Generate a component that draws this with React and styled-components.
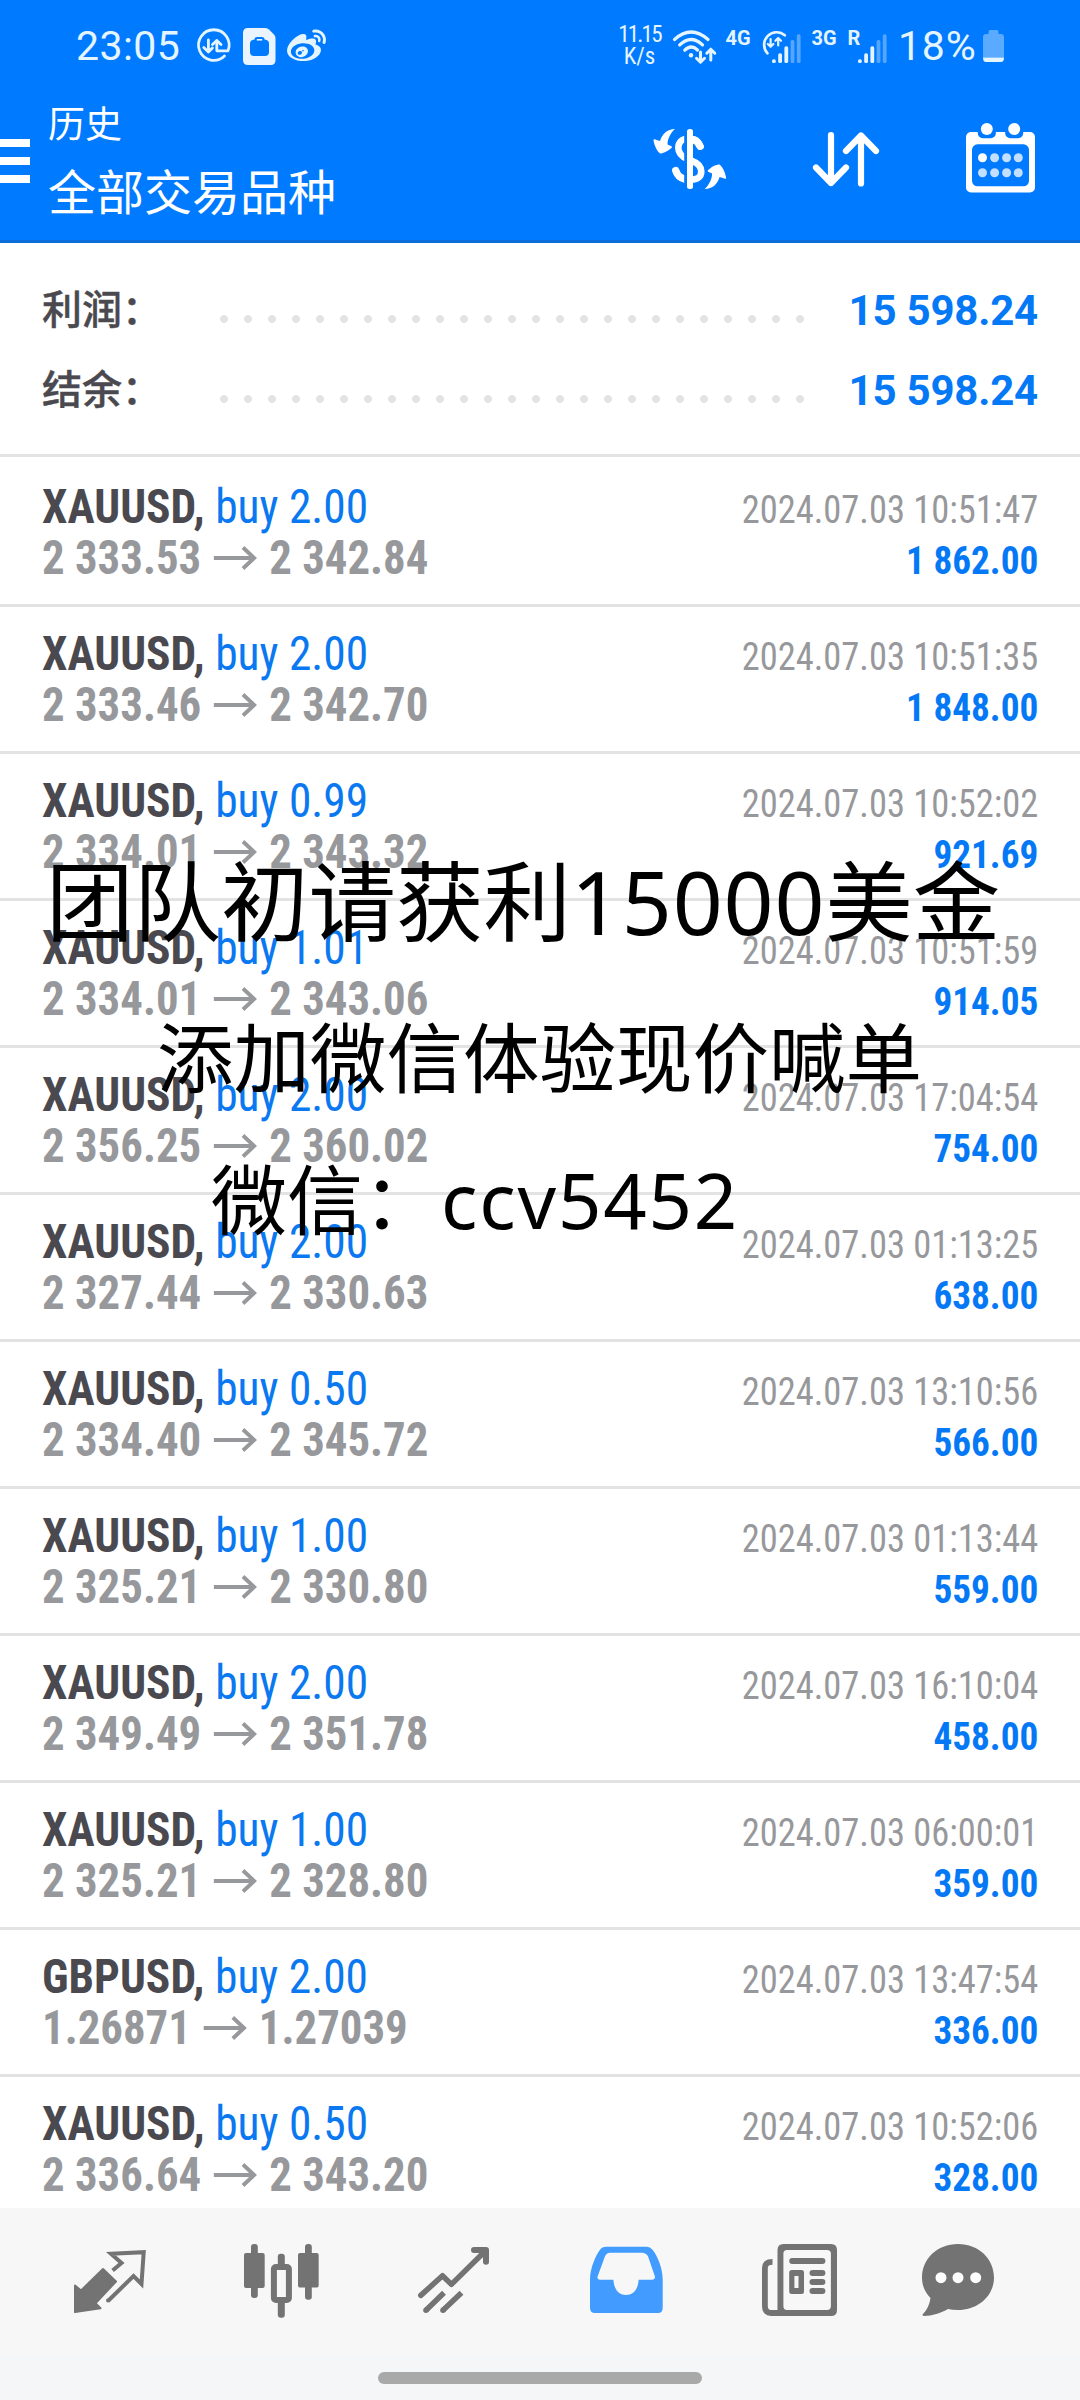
import React from 'react';
import styled, { createGlobalStyle, css } from 'styled-components';
import { FaWeibo } from 'react-icons/fa';

const GlobalStyle = createGlobalStyle`
  * {
    box-sizing: border-box;
  }

  body {
    margin: 0;
    background: #fff;
    font-family: Roboto, "Noto Sans CJK SC", sans-serif;
  }

  svg {
    display: block;
    flex: none;
    overflow: visible;
  }
`;

const Screen = styled.div`
  position: relative;
  display: flex;
  flex-direction: column;
  width: 1080px;
  height: 2400px;
  overflow: hidden;
  background: #fff;
`;

const Header = styled.header`
  flex: none;
  height: 243px;
  background: #007aff;
  border-bottom: 3px solid #0c6fd8;
  color: #fff;
`;

const StatusBar = styled.div`
  display: flex;
  align-items: center;
  height: 92px;
  padding: 0 76px;
  color: #e4f5ff;
`;

const StatusIcon = styled.span`
  display: flex;
  flex: none;
  margin-left: ${({ $gap }) => $gap}px;
`;

const StatusText = styled.span`
  flex: none;
  width: ${({ $width }) => $width}px;
  margin-left: ${({ $gap }) => $gap || 0}px;
  font-size: 41px;
  line-height: 48px;
  letter-spacing: ${({ $spacing }) => $spacing || 0}px;
  white-space: nowrap;
`;

const NetSpeed = styled.span`
  display: flex;
  flex: none;
  flex-direction: column;
  align-items: center;
  width: 46px;
  margin-left: auto;
  font-size: 23px;
  font-stretch: 80%;
  line-height: 22.5px;
`;

const SpeedValue = styled.span`
  letter-spacing: -1.8px;
`;

const NetType = styled.span`
  flex: none;
  align-self: flex-start;
  width: ${({ $width }) => $width}px;
  margin: 27px 0 0 ${({ $gap }) => $gap}px;
  font-size: 20px;
  font-weight: 700;
  line-height: 23px;
`;

const Toolbar = styled.div`
  display: flex;
  align-items: flex-start;
  padding-right: 45px;
`;

const MenuButton = styled.div`
  display: flex;
  flex-direction: column;
  gap: 10px;
  width: 30px;
  margin-top: 47px;
`;

const MenuBar = styled.span`
  height: 8px;
  background: #fff;
`;

const Titles = styled.div`
  flex: 1;
  margin-left: 18px;
`;

const Section = styled.div`
  margin-top: 7px;
  font-size: 37px;
  line-height: 54px;
`;

const Symbols = styled.h1`
  margin: 6px 0 0;
  font-size: 48px;
  font-weight: 400;
  line-height: 70px;
`;

const Action = styled.span`
  margin: ${({ $top }) => $top}px 0 0 ${({ $gap }) => $gap}px;
`;

const Summary = styled.section`
  flex: none;
  height: 211px;
  padding: 27px 42px 0;
`;

const SummaryRow = styled.div`
  display: flex;
  align-items: center;
  height: 80px;
`;

const SummaryLabel = styled.span`
  width: 178px;
  padding-top: 2px;
  color: #4a494f;
  font-size: 40px;
  font-weight: 500;
  line-height: 60px;
  -webkit-text-stroke: 0.4px #4a494f;
`;

const Dots = styled.span`
  width: 600px;
  height: 24px;
  margin-top: 18px;
  margin-left: -8px;
  background: radial-gradient(circle at center, #e3e3e3 3.5px, transparent 4.2px) 0 0 / 24px 24px;
`;

const SummaryValue = styled.span`
  margin-left: auto;
  color: #0579f5;
  font-size: 42px;
  font-weight: 700;
  letter-spacing: -0.2px;
  white-space: nowrap;
`;

const DealList = styled.main`
  flex: 1;
  min-height: 0;
  overflow: hidden;
`;

const Deal = styled.article`
  display: flex;
  justify-content: space-between;
  height: 147px;
  padding: 21px 42px 0;
  border-top: 3px solid #e3e3e3;

  &:first-child {
    height: 150px;
    padding-top: 24px;
  }
`;

const condensed = css`
  font-stretch: 75%;
  white-space: nowrap;
  line-height: 51px;
`;

const DealSide = styled.div`
  margin-top: ${({ $end }) => ($end ? 3 : 0)}px;
  text-align: ${({ $end }) => ($end ? 'right' : 'left')};
`;

const DealName = styled.div`
  ${condensed}
  color: #4a494f;
  font-size: 48.5px;
  font-weight: 700;
  transform: scaleX(0.937);
  transform-origin: left;
`;

const Volume = styled.span`
  color: #0a78f0;
  font-weight: 400;
`;

const Prices = styled.div`
  ${condensed}
  display: flex;
  align-items: center;
  color: #97989b;
  font-size: 48.5px;
  font-weight: 700;
  transform: scaleX(0.924);
  transform-origin: left;

  svg {
    margin: 0 12.5px 0 14px;
  }
`;

const DealTime = styled.div`
  ${condensed}
  color: #97989b;
  font-size: 39.5px;
  transform: scaleX(0.923);
  transform-origin: right;
`;

const Profit = styled.div`
  ${condensed}
  color: #0579f5;
  font-size: 39.5px;
  font-weight: 700;
  transform: scaleX(0.943);
  transform-origin: right;
`;

const Promo = styled.div`
  position: absolute;
  left: ${({ $left }) => $left}px;
  top: ${({ $top }) => $top}px;
  color: #000;
  font-family: "Noto Sans CJK SC", sans-serif;
  font-size: ${({ $size }) => $size}px;
  line-height: 120px;
  white-space: nowrap;
`;

const Latin = styled.span`
  margin-left: ${({ $gap }) => $gap || 0}px;
  font-family: "Noto Sans", sans-serif;
  letter-spacing: ${({ $spacing }) => $spacing}px;
`;

const BottomNav = styled.nav`
  display: grid;
  flex: none;
  grid-template-columns: 170px 174px 172px 172px 160px 72px;
  height: 147px;
  padding: 36px 0 0 74px;
  background: #f7f7f7;
  color: #737373;
`;

const NavItem = styled.span`
  color: ${({ $active }) => ($active ? '#429bff' : 'inherit')};
`;

const HomeStrip = styled.div`
  flex: none;
  height: 45px;
  padding-top: 17px;
  background: #f5f6f8;
`;

const HomeBar = styled.div`
  width: 324px;
  height: 12px;
  margin: 0 auto;
  border-radius: 6px;
  background: #a9a9a9;
`;

const DataIcon = () => (
  <svg width="34" height="34" viewBox="0 0 34 34" fill="none" stroke="currentColor" strokeWidth="2.8" strokeLinecap="round" strokeLinejoin="round">
    <path d="M28.5 27A15.3 15.3 0 1 1 32 21.8H20.8V12" />
    <path d="M12.4 11V22.5M7.8 18.5l4.6 4.5 4-4M16.5 15.5l4.3-4 4.2 4" />
  </svg>
);

const SimIcon = () => (
  <svg width="33" height="37" viewBox="0 0 33 37">
    <path fill="#eaf4ff" d="M5 0H22.5Q24.5 0 26 1.5L31 6.5Q32.5 8 32.5 10V32Q32.5 37 28 37H5Q0 37 0 32V5Q0 0 5 0Z" />
    <path fill="#007aff" d="M11.5 11.5Q11.5 9 14 9H19Q21.5 9 21.5 11.5Q26 12 26 15.5V24Q26 28 22 28H11Q7 28 7 24V15.5Q7 12 11.5 11.5Z" />
    <path stroke="#eaf4ff" strokeWidth="1.6" d="M13.8 11.8H19.2" />
  </svg>
);

const WifiIcon = () => (
  <svg width="44" height="35" viewBox="0 0 44 35" fill="none" stroke="currentColor" strokeWidth="3.3" strokeLinecap="round" strokeLinejoin="round">
    <path d="M2.5 10.5Q19 -4.5 36 10.5M7.7 15.9Q19 5 30.5 15.9M12.8 21.2Q19 15 25.5 21" />
    <circle cx="19" cy="26.3" r="2.2" fill="currentColor" stroke="none" />
    <path d="M28.5 23V33M24.5 29.3l4 4 4-4M38.8 31V20.5M34.8 24.2l4-4 4 4" strokeWidth="3" />
  </svg>
);

const bars = [
  { y: 30.3, faded: false },
  { y: 24.3, faded: false },
  { y: 17.3, faded: false },
  { y: 11, faded: true },
  { y: 5.3, faded: true },
];

const SignalIcon = ({ data }) => (
  <svg width={data ? 40 : 29} height="34" viewBox={data ? '0 0 40 34' : '11 0 29 34'}>
    {data && (
      <g fill="none" stroke="currentColor" strokeLinecap="round" strokeLinejoin="round">
        <path strokeWidth="2.7" d="M23.8 6.3A12.5 12.5 0 0 0 6.500 24.3" />
        <path strokeWidth="2.2" d="M9.6 10V17.5M6.8 15l2.8 2.8L12.4 15M17.2 16.5V9M14.4 11.8L17.2 9L20 11.8" />
      </g>
    )}
    {bars.map(({ y, faded }, i) => (
      <rect key={y} x={11 + i * 6.2} y={y} width="3.8" height={34 - y} rx="1.6" fill={faded ? '#55a6ff' : 'currentColor'} />
    ))}
  </svg>
);

const BatteryIcon = () => (
  <svg width="21" height="32" viewBox="0 0 21 32">
    <path fill="#5aaaff" d="M7 0H14Q15.5 0 15.5 2V4H18Q21 4 21 7V27.5H0V7Q0 4 3 4H5.5V2Q5.5 0 7 0Z" />
    <path fill="#e4f5ff" d="M0 27.5H21Q21 32 18 32H3Q0 32 0 27.5Z" />
  </svg>
);

const CurrencyIcon = () => (
  <svg width="74" height="62" viewBox="0 0 74 62" fill="#fff">
    <path
      fill="none"
      stroke="#fff"
      strokeWidth="6.6"
      strokeLinecap="round"
      d="M47.5 18.500C45 13 42 10.800 35.5 10.500C29 10.500 25.300 14.500 25.300 20C25.300 26 29 28.800 35 31.200L39 32.800C45 35 48.300 38 48.300 43.500C48.300 49 44 51.700 38 51.700"
    />
    <path fill="none" stroke="#fff" strokeWidth="7.4" strokeLinecap="round" d="M47 18.200C45.500 15 44 13 41 11.800M22.700 42.500C24 47 27.500 50 32 51.300" />
    <path fill="#007aff" d="M31.2 3H34.2V58H31.2Z" />
    <rect x="34" y="1" width="6" height="60" rx="2.5" />
    <path d="M22 1C14 1 9 6 7 13L1.500 11.200Q.2 11 .5 12.500C1.500 18 4 23 6.500 25C7 25.600 8 25.500 9 25.200C13 24.500 16 22 18.500 20Q19.500 19 18.500 18.200L14.500 16.500C14.500 11 17.500 5 22 1Z" />
    <path
      d="M22 1C14 1 9 6 7 13L1.500 11.200Q.2 11 .5 12.500C1.500 18 4 23 6.500 25C7 25.600 8 25.500 9 25.200C13 24.500 16 22 18.500 20Q19.500 19 18.500 18.200L14.500 16.500C14.500 11 17.500 5 22 1Z"
      transform="rotate(180 36.8 31)"
    />
  </svg>
);

const SortIcon = () => (
  <svg width="66" height="55" viewBox="0 0 66 55" fill="none" stroke="#fff" strokeWidth="6.2" strokeLinecap="round" strokeLinejoin="round">
    <path d="M18 3V51M3 35.5L18 51L33 35.5" />
    <path d="M48 51.5V3.5M33 19L48 3.5L63 19" />
  </svg>
);

const CalendarIcon = () => (
  <svg width="69" height="70" viewBox="0 0 69 70" fill="#fff">
    <rect y="9" width="69" height="60.5" rx="5" />
    {[20.8, 48.2].map((x) => (
      <g key={x}>
        <rect x={x - 9} y="0" width="18" height="15.3" rx="5" fill="#007aff" />
        <circle cx={x} cy="6" r="6" />
      </g>
    ))}
    <rect x="6" y="21.3" width="57" height="42" rx="5.5" fill="#007aff" />
    {[34.7, 49.7].map((y, row) =>
      [16.5, 28.6, 40.6, 52.3].map((x, col) => (
        <circle key={`${x}-${y}`} cx={x} cy={y} r="4.5" fill={row === 0 && col === 0 ? '#fff' : '#c3dfff'} />
      ))
    )}
  </svg>
);

const PriceArrow = () => (
  <svg width="47" height="24" viewBox="0 0 47 24" fill="none" stroke="currentColor" strokeWidth="4.2">
    <path d="M0 12H43.5M31.5 1.5L43.5 12L31.5 22.5" />
  </svg>
);

const TradeIcon = () => (
  <svg width="72" height="74" viewBox="0 -6 72 74">
    <path fill="currentColor" stroke="currentColor" strokeWidth="2" strokeLinejoin="round" d="M1 35.5L7 40.5L29 19L42 31.5L21.5 53.3L26.5 58.3L1 62Z" />
    <path fill="none" stroke="currentColor" strokeWidth="4" d="M38.6 20.5L47.5 13L37 3.8L69.7 2.2L67.5 34L59.5 26L34 51" />
    <circle cx="34" cy="50.5" r="2" fill="currentColor" />
  </svg>
);

const CandlesIcon = () => (
  <svg width="75" height="74" viewBox="0 0 75 74" fill="currentColor">
    <rect y="9" width="20.7" height="35" rx="2" />
    <rect x="7" width="6.8" height="54" rx="3" />
    <rect x="54" y="9" width="20.7" height="34.5" rx="2" />
    <rect x="61" width="6.8" height="55.7" rx="3" />
    <rect x="33.8" y="9.7" width="7" height="15" rx="3" />
    <rect x="33.8" y="54" width="7" height="19.7" rx="3" />
    <rect x="29.9" y="23" width="15" height="33" rx="2" fill="#f7f7f7" stroke="currentColor" strokeWidth="6" />
  </svg>
);

const ChartIcon = () => (
  <svg width="72" height="74" viewBox="0 -2.7 72 74" fill="none" stroke="currentColor" strokeWidth="5.5" strokeLinejoin="round">
    <path strokeLinecap="round" d="M2.8 48.7L24.5 29L33.4 37.7L67 4.5" />
    <path strokeLinecap="round" strokeWidth="6" d="M56 3.2H68V15" />
    <path d="M8 63.5L26 46M25 63.5L43.5 46" />
    <g fill="currentColor" stroke="none">
      <circle cx="8" cy="63.5" r="2.8" />
      <circle cx="25" cy="63.5" r="2.8" />
    </g>
  </svg>
);

const InboxIcon = () => (
  <svg width="73" height="74" viewBox="0 -2.7 73 74">
    <path
      fill="currentColor"
      fillRule="evenodd"
      d="M0 33C0 22 5 10 10 3Q12 0 16 0H57Q60 0 62.5 3C68 10 72.7 22 72.7 33V61Q72.7 66.3 68 66.3H5Q0 66.3 0 61ZM20 6Q16.5 6 15 9.5L7.5 30Q7 33 10 33H23.4C24 43 29 48.3 36 48.3S48.2 43 48.6 33H62Q65 33 65 30L58 9.5Q56 6 52 6Z"
    />
  </svg>
);

const NewsIcon = () => (
  <svg width="75" height="74" viewBox="0 0 75 74" fill="currentColor">
    <path fillRule="evenodd" d="M21.5 0H69Q75 0 75 6V66Q75 72 69 72H15.5V6Q15.5 0 21.5 0ZM25 6Q21.4 6 21.4 9.5V62Q21.4 66 25 66H65Q68.9 66 68.9 62V9.5Q68.9 6 65 6Z" />
    <path fill="none" stroke="currentColor" strokeWidth="5.8" d="M10.5 17.8Q2.9 17.8 2.9 24V62Q2.9 69 9 69H17" />
    <rect x="27.2" y="14" width="36.2" height="6" rx="3" />
    <path fillRule="evenodd" d="M30 26H39.5Q42 26 42 28.5V47.5Q42 50 39.5 50H30Q27.2 50 27.2 47.5V28.5Q27.2 26 30 26ZM32.4 32V44H36.5V32Z" />
    <rect x="47.5" y="26" width="15.9" height="6" rx="3" />
    <rect x="47.5" y="35" width="15.9" height="6" rx="3" />
    <rect x="47.5" y="44" width="15.9" height="6" rx="3" />
  </svg>
);

const ChatIcon = () => (
  <svg width="72" height="74" viewBox="0 0 72 74">
    <path fill="currentColor" d="M36 0C57 0 72 15 72 33.5C72 52 56 66 36 66Q30 66 26 65C19 69 10 72 2 72Q-.5 71.5 1 70Q7 64 8.500 54C3 48 0 42 0 33.500C0 15 15 0 36 0Z" />
    <g fill="#fff">
      <circle cx="19" cy="33.7" r="5.5" />
      <circle cx="36" cy="33.7" r="5.5" />
      <circle cx="53.7" cy="33.7" r="5.5" />
    </g>
  </svg>
);

const summary = [
  { label: '利润：', value: '15 598.24' },
  { label: '结余：', value: '15 598.24' },
];

const deals = [
  { symbol: 'XAUUSD', volume: '2.00', open: '2 333.53', close: '2 342.84', time: '2024.07.03 10:51:47', profit: '1 862.00' },
  { symbol: 'XAUUSD', volume: '2.00', open: '2 333.46', close: '2 342.70', time: '2024.07.03 10:51:35', profit: '1 848.00' },
  { symbol: 'XAUUSD', volume: '0.99', open: '2 334.01', close: '2 343.32', time: '2024.07.03 10:52:02', profit: '921.69' },
  { symbol: 'XAUUSD', volume: '1.01', open: '2 334.01', close: '2 343.06', time: '2024.07.03 10:51:59', profit: '914.05' },
  { symbol: 'XAUUSD', volume: '2.00', open: '2 356.25', close: '2 360.02', time: '2024.07.03 17:04:54', profit: '754.00' },
  { symbol: 'XAUUSD', volume: '2.00', open: '2 327.44', close: '2 330.63', time: '2024.07.03 01:13:25', profit: '638.00' },
  { symbol: 'XAUUSD', volume: '0.50', open: '2 334.40', close: '2 345.72', time: '2024.07.03 13:10:56', profit: '566.00' },
  { symbol: 'XAUUSD', volume: '1.00', open: '2 325.21', close: '2 330.80', time: '2024.07.03 01:13:44', profit: '559.00' },
  { symbol: 'XAUUSD', volume: '2.00', open: '2 349.49', close: '2 351.78', time: '2024.07.03 16:10:04', profit: '458.00' },
  { symbol: 'XAUUSD', volume: '1.00', open: '2 325.21', close: '2 328.80', time: '2024.07.03 06:00:01', profit: '359.00' },
  { symbol: 'GBPUSD', volume: '2.00', open: '1.26871', close: '1.27039', time: '2024.07.03 13:47:54', profit: '336.00' },
  { symbol: 'XAUUSD', volume: '0.50', open: '2 336.64', close: '2 343.20', time: '2024.07.03 10:52:06', profit: '328.00' },
];

const App = () => {
  return (
    <>
      <GlobalStyle />
      <Screen>
        <Header>
          <StatusBar>
            <StatusText $width={103} $spacing={0.4}>23:05</StatusText>
            <StatusIcon $gap={17}><DataIcon /></StatusIcon>
            <StatusIcon $gap={13}><SimIcon /></StatusIcon>
            <StatusIcon $gap={11}><FaWeibo size={39} /></StatusIcon>
            <NetSpeed>
              <SpeedValue>11.15</SpeedValue>
              <span>K/s</span>
            </NetSpeed>
            <StatusIcon $gap={9}><WifiIcon /></StatusIcon>
            <NetType $gap={10} $width={26}>4G</NetType>
            <StatusIcon $gap={9}><SignalIcon data /></StatusIcon>
            <NetType $gap={11} $width={26}>3G</NetType>
            <NetType $gap={10} $width={11}>R</NetType>
            <StatusIcon $gap={-1}><SignalIcon /></StatusIcon>
            <StatusText $gap={11.5} $width={81} $spacing={0.8}>18%</StatusText>
            <StatusIcon $gap={4}><BatteryIcon /></StatusIcon>
          </StatusBar>
          <Toolbar>
            <MenuButton>
              <MenuBar />
              <MenuBar />
              <MenuBar />
            </MenuButton>
            <Titles>
              <Section>历史</Section>
              <Symbols>全部交易品种</Symbols>
            </Titles>
            <Action $top={36} $gap={0}><CurrencyIcon /></Action>
            <Action $top={40} $gap={86}><SortIcon /></Action>
            <Action $top={31} $gap={87}><CalendarIcon /></Action>
          </Toolbar>
        </Header>

        <Summary>
          {summary.map(({ label, value }) => (
            <SummaryRow key={label}>
              <SummaryLabel>{label}</SummaryLabel>
              <Dots />
              <SummaryValue>{value}</SummaryValue>
            </SummaryRow>
          ))}
        </Summary>

        <DealList>
          {deals.map(({ symbol, volume, open, close, time, profit }) => (
            <Deal key={time}>
              <DealSide>
                <DealName>{symbol}, <Volume>buy {volume}</Volume></DealName>
                <Prices>{open}<PriceArrow />{close}</Prices>
              </DealSide>
              <DealSide $end>
                <DealTime>{time}</DealTime>
                <Profit>{profit}</Profit>
              </DealSide>
            </Deal>
          ))}
        </DealList>

        <BottomNav>
          <NavItem><TradeIcon /></NavItem>
          <NavItem><CandlesIcon /></NavItem>
          <NavItem><ChartIcon /></NavItem>
          <NavItem $active><InboxIcon /></NavItem>
          <NavItem><NewsIcon /></NavItem>
          <NavItem><ChatIcon /></NavItem>
        </BottomNav>
        <HomeStrip>
          <HomeBar />
        </HomeStrip>

        <Promo $left={46} $top={837} $size={87.5}>团队初请获利<Latin $spacing={0.8}>15000</Latin>美金</Promo>
        <Promo $left={157} $top={994} $size={76.5}>添加微信体验现价喊单</Promo>
        <Promo $left={211} $top={1136} $size={76}>微信：<Latin $gap={2} $spacing={1.8}>ccv5452</Latin></Promo>
      </Screen>
    </>
  );
};

export default App;
